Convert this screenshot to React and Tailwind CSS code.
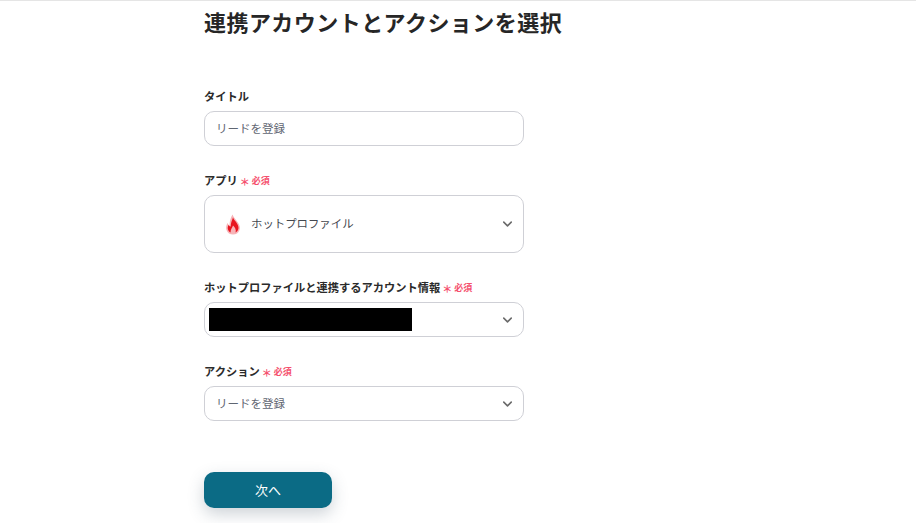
import { ChevronDown } from 'lucide-react';

const font = { fontFamily: '"Noto Sans CJK JP", "Noto Sans", sans-serif' };

function Label({ text, required }) {
  return (
    <div className="flex h-[18px] items-center text-[11.25px] leading-[18px] font-bold text-[#2b2b2b]">
      <span>{text}</span>
      {required && (
        <span className="ml-[2px] flex items-center text-[#f5506e]">
          <span className="mt-[3px] w-[10px] text-center text-[10px] leading-[18px] font-bold">＊</span>
          <span className="ml-[2px] mt-[1px] text-[9px] font-bold">必須</span>
        </span>
      )}
    </div>
  );
}

function Chevron() {
  return <ChevronDown size={15} strokeWidth={2.5} className="absolute right-[8px] top-1/2 -translate-y-1/2 text-[#6b6b6b]" />;
}

function Flame() {
  return (
    <svg width="16" height="21" viewBox="0 0 16 21">
      <path d="M7.500 0.500c1 3 3 4.500 5 7.500 2 3 3 5 2 8-1 3-3.500 4.500-6.500 4.500s-5.500-1.500-6.500-4.500c-1-3 0-5 1-7 .7 1 1 2 2 2.500 0-4.500 1-7.500 3-11z" fill="#f7b4b8" />
      <path d="M8 3.500c1 2.500 2.500 3.500 4 6 1.500 2.500 2 4.500 1 6.500-.6 1.300-1.500 2-2.500 2.500 1-2.500-.5-5-2.500-7-.5 2-2.500 3.500-2.500 7-1-.5-2-1.500-2.500-3-.5-1.500-.2-3 .4-4.500 .6.800 1.300 1.500 2.300 1.500 0-3.500 1.300-6 2.300-9z" fill="#e8141f" />
    </svg>
  );
}

export default function App() {
  return (
    <div style={font} className="h-[523px] w-[916px] overflow-hidden border-t border-[#e5e5e5] bg-white">
      <div className="ml-[204px] w-[320px]">
        <h1 className="mt-[5px] whitespace-nowrap text-[22px] leading-[30px] font-bold tracking-[0.45px] text-[#262626]">
          連携アカウントとアクションを選択
        </h1>

        <div className="mt-[51px]">
          <Label text="タイトル" />
          <div className="mt-[6px] flex h-[35px] items-center rounded-[10px] border border-[#cfd0d6] px-[11px] text-[11.5px] text-[#5f6672]">
            <span>リードを登録</span>
          </div>
        </div>

        <div className="mt-[25px]">
          <Label text="アプリ" required />
          <div className="relative mt-[6px] flex h-[58px] items-center rounded-[10px] border border-[#cfd0d6] pl-[20px] text-[11.4px] text-[#44484f]">
            <Flame />
            <span className="ml-[10px]">ホットプロファイル</span>
            <Chevron />
          </div>
        </div>

        <div className="mt-[25px]">
          <Label text="ホットプロファイルと連携するアカウント情報" required />
          <div className="relative mt-[6px] flex h-[35px] items-center rounded-[10px] border border-[#cfd0d6] pl-[4px]">
            <div className="h-[23px] w-[203px] bg-black" />
            <Chevron />
          </div>
        </div>

        <div className="mt-[25px]">
          <Label text="アクション" required />
          <div className="relative mt-[6px] flex h-[35px] items-center rounded-[10px] border border-[#cfd0d6] px-[11px] pt-[1px] text-[11.5px] text-[#5f6672]">
            <span>リードを登録</span>
            <Chevron />
          </div>
        </div>

        <button className="mt-[51px] flex h-[36px] w-[128px] items-center justify-center rounded-[10px] bg-[#0b6b85] text-[13px] text-white shadow-[0_6px_16px_rgba(60,80,100,0.25)]">
          次へ
        </button>
      </div>
    </div>
  );
}
